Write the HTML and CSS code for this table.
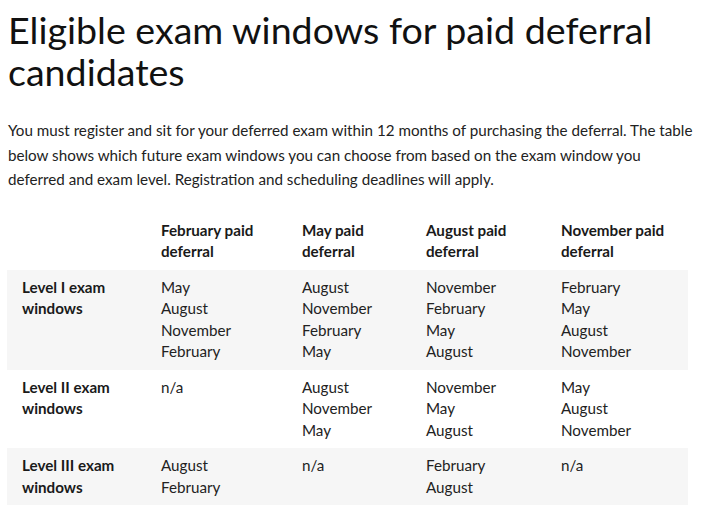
FILE: index.html
```html
<!DOCTYPE html>
<html lang="en">
<head>
<meta charset="utf-8">
<link rel="stylesheet" href="styles.css">
</head>
<body>
<main class="page">
  <h1 class="title">Eligible exam windows for paid deferral candidates</h1>
  <p class="intro">You must register and sit for your deferred exam within 12 months of purchasing the deferral. The table below shows which future exam windows you can choose from based on the exam window you deferred and exam level. Registration and scheduling deadlines will apply.</p>
  <table class="windows">
    <colgroup>
      <col class="c1"><col class="c2"><col class="c3"><col class="c4"><col class="c5">
    </colgroup>
    <thead>
      <tr>
        <th></th>
        <th>February paid deferral</th>
        <th>May paid deferral</th>
        <th>August paid deferral</th>
        <th>November paid deferral</th>
      </tr>
    </thead>
    <tbody>
      <tr class="shade">
        <th>Level I exam windows</th>
        <td>May<br>August<br>November<br>February</td>
        <td>August<br>November<br>February<br>May</td>
        <td>November<br>February<br>May<br>August</td>
        <td>February<br>May<br>August<br>November</td>
      </tr>
      <tr>
        <th>Level II exam windows</th>
        <td>n/a</td>
        <td>August<br>November<br>May</td>
        <td>November<br>May<br>August</td>
        <td>May<br>August<br>November</td>
      </tr>
      <tr class="shade">
        <th>Level III exam windows</th>
        <td>August<br>February</td>
        <td>n/a</td>
        <td>February<br>August</td>
        <td>n/a</td>
      </tr>
    </tbody>
  </table>
</main>
</body>
</html>
```
FILE: styles.css
```css
html, body {
  margin: 0;
  padding: 0;
  background: #ffffff;
}
.page {
  padding: 0 8px;
  font-family: Lato, "Open Sans", sans-serif;
  color: #1d1d1d;
}
.title {
  margin: 0;
  padding-top: 9px;
  font-size: 37.6px;
  line-height: 42px;
  font-weight: 400;
  color: #111;
}
.intro {
  margin: 25px 0 0 0;
  font-size: 15.2px;
  line-height: 24.5px;
  color: #222;
}
.windows {
  margin-top: 21px;
  margin-left: -1px;
  width: 681px;
  table-layout: fixed;
  border-collapse: collapse;
  font-size: 15.2px;
  line-height: 21.5px;
  color: #222;
}
.c1 { width: 154px; }
.c2 { width: 141px; }
.c3 { width: 124px; }
.c4 { width: 135px; }
.c5 { width: 127px; }
.windows th, .windows td {
  text-align: left;
  vertical-align: top;
  padding: 7px 8px 7px 0;
}
.windows thead th { padding-right: 14px; }
.windows tbody th { padding-left: 15px; padding-right: 20px; }
.windows th { font-weight: 700; color: #1a1a1a; }
.shade { background: #f6f6f6; }
```
